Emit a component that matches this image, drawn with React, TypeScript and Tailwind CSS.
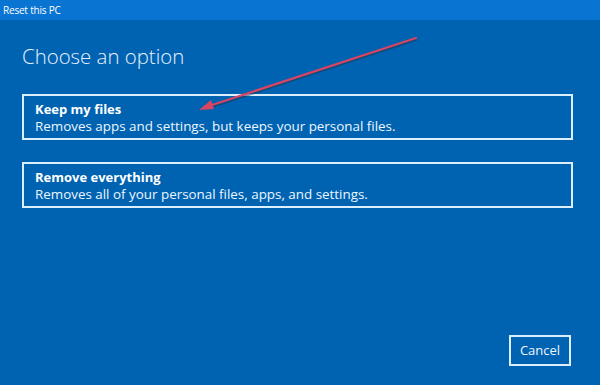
import React from 'react';

const options = [
  { title: 'Keep my files', desc: 'Removes apps and settings, but keeps your personal files.' },
  { title: 'Remove everything', desc: 'Removes all of your personal files, apps, and settings.' },
];

export default function App() {
  return (
    <div
      className="relative w-[600px] h-[385px] overflow-hidden bg-[#0063b1] text-white flex flex-col"
      style={{ fontFamily: '"Open Sans", "Noto Sans", sans-serif' }}
    >
      {/* title bar */}
      <div className="h-[20px] bg-[#0a74d2] flex items-center px-[3px] text-[10px] leading-none tracking-[-0.2px]">
        Reset this PC
      </div>

      <div className="flex-1 flex flex-col pl-[22px] pr-[27px]">
        <h1 className="mt-[23px] text-[20.4px] font-light leading-[26px] text-[#e6f2ff]">Choose an option</h1>

        <div className="mt-[25px] flex flex-col gap-[22px]">
          {options.map((o) => (
            <div
              key={o.title}
              className="h-[46px] border-2 border-[#dcefff] px-[11px] pt-[5px] flex flex-col"
            >
              <div className="text-[13px] font-bold leading-[17px]">{o.title}</div>
              <div className="text-[13.4px] leading-[17px] text-[#eef6ff]">{o.desc}</div>
            </div>
          ))}
        </div>

        <div className="flex-1" />

        <div className="flex justify-end pb-[19px] pr-[2px]">
          <button className="w-[62px] h-[31px] border-2 border-[#dcefff] text-[13px] text-[#eef6ff] flex items-center justify-center">
            Cancel
          </button>
        </div>
      </div>

      {/* annotation arrow */}
      <svg className="absolute left-0 top-0 pointer-events-none" width="600" height="385">
        <line x1="416" y1="38" x2="206" y2="107" stroke="#1a3550" strokeOpacity="0.5" strokeWidth="3" transform="translate(1,1)" />
        <line x1="416" y1="38" x2="206" y2="107" stroke="#d94462" strokeWidth="2.2" strokeLinecap="round" />
        <path d="M199 110 L211 100 L214 109 Z" fill="#d94462" />
      </svg>
    </div>
  );
}
